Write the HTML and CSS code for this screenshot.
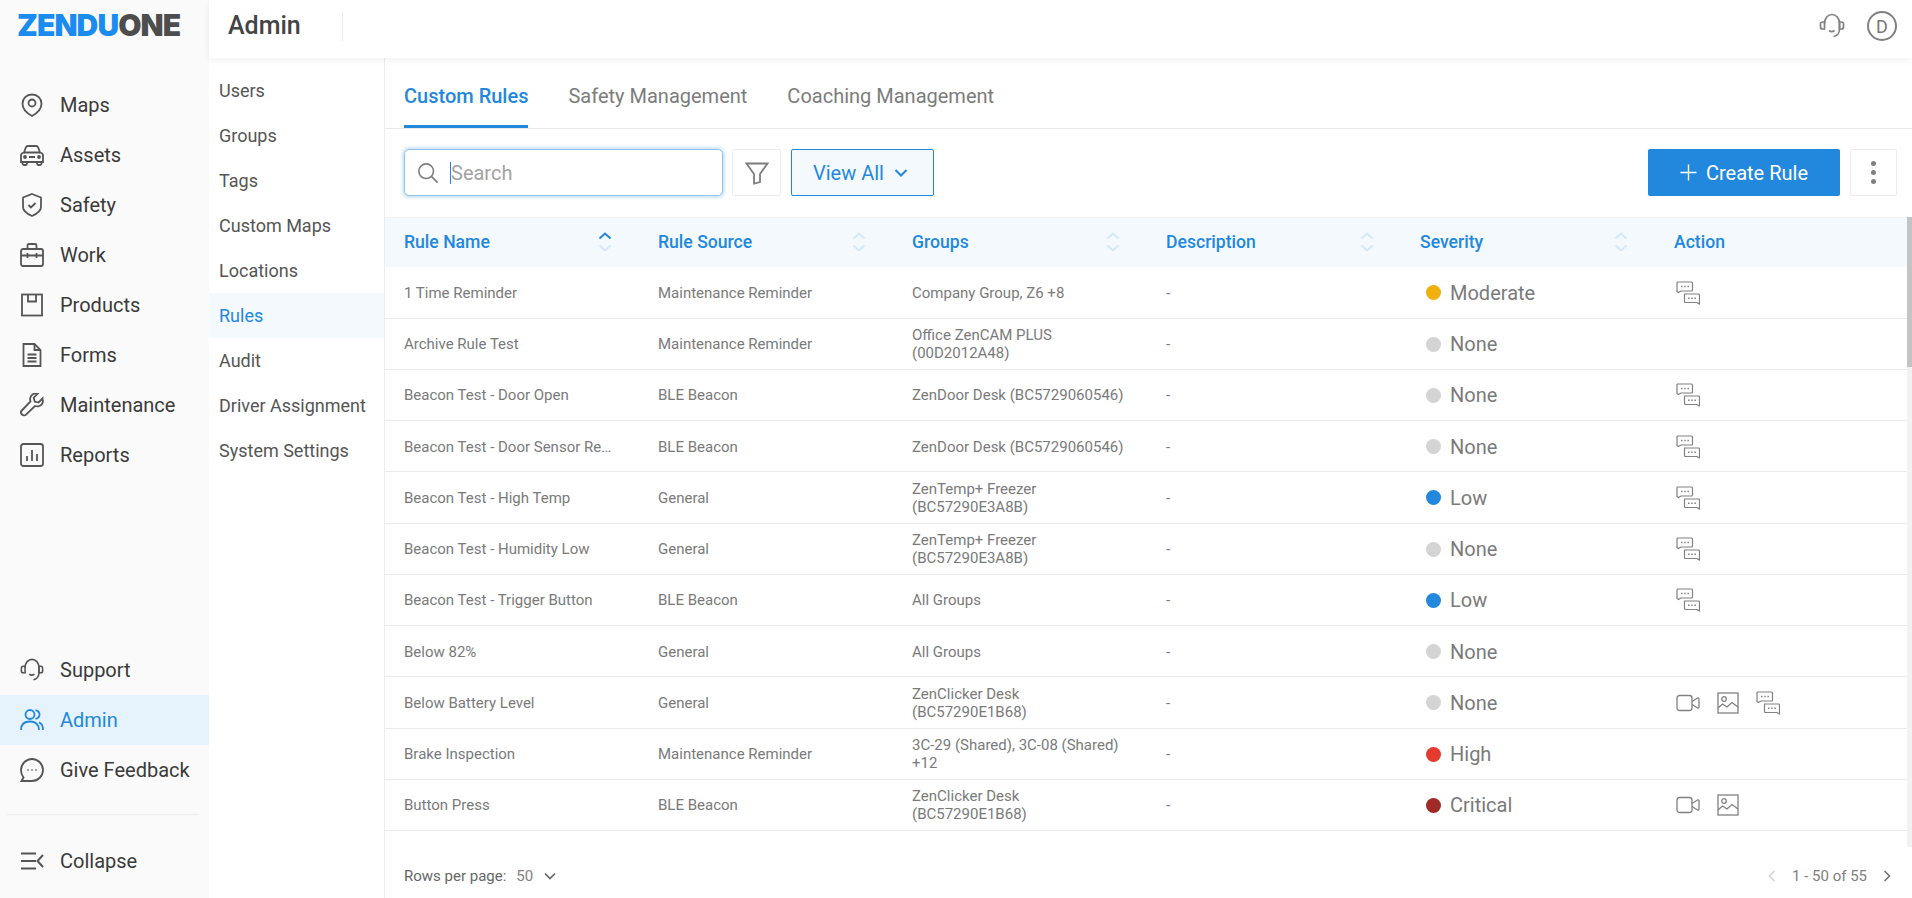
FILE: index.html
```html
<!DOCTYPE html>
<html lang="en">
<head>
<meta charset="utf-8">
<title>ZenduOne Admin - Rules</title>
<link rel="stylesheet" href="styles.css">
</head>
<body>
<svg class="defs" width="0" height="0" aria-hidden="true">
  <symbol id="i-chat" viewBox="0 0 24 24" fill="none" stroke="currentColor" stroke-width="1.2">
    <path d="M1.500 1h14a1 1 0 0 1 1 1v7a1 1 0 0 1-1 1H5L2.500 11.500 1 10.500V1.500z"/>
    <path d="M8.500 13h14a1 1 0 0 1 1 1v7l-.3 2-2.200-1.500H9.500a1 1 0 0 1-1-1V14z"/>
    <path d="M5 5.500h1.500M8.200 5.500h1.500M11.400 5.500h1.500M12 17.200h1.500M15.200 17.200h1.500M18.400 17.200h1.500" stroke-width="1.500"/>
  </symbol>
  <symbol id="i-video" viewBox="0 0 24 18" fill="none" stroke="currentColor" stroke-width="1.300">
    <rect x="1" y="1.500" width="15" height="15" rx="2.500"/>
    <path d="M16 7.500l5.500-3.500c.8-.4 1.500 0 1.500.8v8.400c0 .8-.7 1.200-1.500.8L16 10.500"/>
  </symbol>
  <symbol id="i-image" viewBox="0 0 22 22" fill="none" stroke="currentColor" stroke-width="1.300">
    <rect x="1" y="1" width="20" height="20"/>
    <circle cx="7" cy="7" r="2.300"/>
    <path d="M1 16l4.500-4 4.500 3 5-4.500 6 4.500"/>
  </symbol>
  <symbol id="i-sort" viewBox="0 0 14 22" fill="none" stroke="currentColor" stroke-width="2">
    <path class="sort-up" d="M1.500 7.500L7 2.500l5.500 5"/>
    <path d="M1.500 14.500L7 19.500l5.500-5"/>
  </symbol>
  <symbol id="i-headset" viewBox="0 0 26 26" fill="none" stroke="currentColor" stroke-width="1.700">
    <path d="M5.500 10.500C5.500 5 9 1.500 13 1.500s7.500 3.500 7.500 9v6c0 4-3 6.500-6 7"/>
    <path d="M5.500 9H3.500A2 2 0 0 0 1.500 11v3a2 2 0 0 0 2 2h2zM20.500 9h2a2 2 0 0 1 2 2v3a2 2 0 0 1-2 2h-2z"/>
    <path d="M10 17.500c1.500 1.200 4 1.200 5.500 0"/>
  </symbol>
</svg>

<div class="app">
  <aside class="sidebar">
    <div class="logo"><span class="logo-blue">ZENDU</span><span class="logo-gray">ONE</span></div>
    <nav class="nav nav-main">
      <a class="nav-item"><svg class="nav-icon" viewBox="0 0 24 24" fill="none" stroke="currentColor" stroke-width="1.800"><path d="M12 1.500c5.500 0 9.500 4 9.500 9.200 0 5.300-5 9.800-9.500 12.300-4.500-2.500-9.500-7-9.500-12.300C2.500 5.500 6.500 1.500 12 1.500z"/><circle cx="12" cy="10" r="3.500"/></svg>Maps</a>
      <a class="nav-item"><svg class="nav-icon" viewBox="0 0 24 24" fill="none" stroke="currentColor" stroke-width="1.800"><path d="M1 12.500c0-1.500 1-2.500 3-3l1.800-5c.4-1 1-1.500 2-1.500h8.400c1 0 1.600.5 2 1.500l1.800 5c2 .5 3 1.500 3 3v6.500H1z"/><path d="M4 9.500h16M2.500 19v1.500c0 1 .5 1.500 1.500 1.500h1.500c1 0 1.500-.5 1.500-1.500V19M17 19v1.500c0 1 .5 1.500 1.500 1.500H20c1 0 1.500-.5 1.500-1.500V19M9 14h6"/><circle cx="5" cy="14" r="1" fill="currentColor"/><circle cx="19" cy="14" r="1" fill="currentColor"/></svg>Assets</a>
      <a class="nav-item"><svg class="nav-icon" viewBox="0 0 24 24" fill="none" stroke="currentColor" stroke-width="1.800"><path d="M12 1l9 3.500v9.500c0 4-4.500 7-9 9-4.500-2-9-5-9-9V4.500z"/><path d="M8.500 12l2.500 2.500 4.500-4.500"/></svg>Safety</a>
      <a class="nav-item"><svg class="nav-icon" viewBox="0 0 24 24" fill="none" stroke="currentColor" stroke-width="1.800"><rect x="1" y="6" width="22" height="17" rx="2"/><path d="M7.500 6V2.500C7.500 1.500 8 1 9 1h6c1 0 1.500.5 1.500 1.500V6M1 12.500h22M7.500 10v5M16.500 10v5"/></svg>Work</a>
      <a class="nav-item"><svg class="nav-icon" viewBox="0 0 24 24" fill="none" stroke="currentColor" stroke-width="1.800"><rect x="2" y="1.500" width="20" height="21"/><path d="M8 1.500v7h8v-7"/></svg>Products</a>
      <a class="nav-item"><svg class="nav-icon" viewBox="0 0 24 24" fill="none" stroke="currentColor" stroke-width="1.800"><path d="M3.500 1h11l6 6v16h-17z"/><path d="M14.500 1v6h6M7.500 11.500h9M7.500 15h9M7.500 18.500h9"/></svg>Forms</a>
      <a class="nav-item"><svg class="nav-icon" viewBox="0 0 24 24" fill="none" stroke="currentColor" stroke-width="1.800"><path d="M22.500 5.500l-4 4-3.800-1-1-3.800 4-4c-3.500-1-7 1-7.500 4.500-.2 1.200 0 2.300.3 3.300L1.800 17.500c-1 1-1 2.800.2 4s3 1.200 4 .2l9-8.700c1 .3 2.100.5 3.300.3 3.500-.5 5.500-4 4.200-7.300z"/></svg>Maintenance</a>
      <a class="nav-item"><svg class="nav-icon" viewBox="0 0 24 24" fill="none" stroke="currentColor" stroke-width="1.800"><rect x="1" y="1" width="22" height="22" rx="2.500"/><path d="M7 13v5M12 7v11M17 11v7"/></svg>Reports</a>
    </nav>
    <nav class="nav nav-bottom">
      <a class="nav-item"><svg class="nav-icon" viewBox="0 0 26 26"><use href="#i-headset"/></svg>Support</a>
      <a class="nav-item active"><svg class="nav-icon" viewBox="0 0 24 24" fill="none" stroke="currentColor" stroke-width="1.800"><circle cx="10" cy="6.500" r="4.500"/><path d="M1 22c0-5.500 3.500-8.500 9-8.500s9 3 9 8.500M15.500 2.200c2.500.5 4 2.200 4 4.300s-1.500 3.800-4 4.300M19 14.300c2.800 1 4 3.800 4 7.700"/></svg>Admin</a>
      <a class="nav-item"><svg class="nav-icon" viewBox="0 0 24 24" fill="none" stroke="currentColor" stroke-width="1.800"><path d="M12 1c6 0 11 5 11 11s-5 11-11 11H1.500l2-3.500C2 17.500 1 15 1 12 1 6 6 1 12 1z"/><path d="M7.500 12h1M11.500 12h1M15.500 12h1" stroke-width="2"/></svg>Give Feedback</a>
    </nav>
    <div class="nav-collapse">
      <a class="nav-item"><svg class="nav-icon" viewBox="0 0 24 24" fill="none" stroke="currentColor" stroke-width="2"><path d="M1 4.500h15M1 12h15M1 19.500h15M23 6l-5.500 6 5.500 6"/></svg>Collapse</a>
    </div>
  </aside>

  <div class="main">
    <header class="topbar">
      <h1 class="page-title">Admin</h1>
      <span class="title-divider"></span>
      <div class="topbar-right">
        <svg class="top-icon" viewBox="0 0 26 26"><use href="#i-headset"/></svg>
        <span class="avatar">D</span>
      </div>
    </header>

    <div class="body">
      <nav class="subnav">
        <a class="sub-item">Users</a>
        <a class="sub-item">Groups</a>
        <a class="sub-item">Tags</a>
        <a class="sub-item">Custom Maps</a>
        <a class="sub-item">Locations</a>
        <a class="sub-item active">Rules</a>
        <a class="sub-item">Audit</a>
        <a class="sub-item">Driver Assignment</a>
        <a class="sub-item">System Settings</a>
      </nav>

      <section class="content">
        <div class="tabs">
          <a class="tab active">Custom Rules</a>
          <a class="tab">Safety Management</a>
          <a class="tab">Coaching Management</a>
        </div>

        <div class="toolbar">
          <div class="search">
            <svg class="search-icon" viewBox="0 0 24 24" fill="none" stroke="currentColor" stroke-width="1.800"><circle cx="10" cy="10" r="8"/><path d="M16 16l6.500 6.500"/></svg>
            <span class="caret"></span>
            <span class="placeholder">Search</span>
          </div>
          <button class="icon-btn filter-btn"><svg viewBox="0 0 24 24" width="24" height="24" fill="none" stroke="currentColor" stroke-width="1.800"><path d="M1.500 2.500h21L15 13v8l-6 1.500V13z"/></svg></button>
          <button class="view-btn">View All<svg viewBox="0 0 14 14" width="14" height="14" fill="none" stroke="currentColor" stroke-width="2"><path d="M1.500 4l5.500 5.500L12.500 4"/></svg></button>
          <span class="spacer"></span>
          <button class="create-btn"><svg viewBox="0 0 18 18" width="17" height="17" fill="none" stroke="currentColor" stroke-width="1.500"><path d="M9 0.500v17M0.500 9h17"/></svg>Create Rule</button>
          <button class="icon-btn more-btn"><span class="dot"></span><span class="dot"></span><span class="dot"></span></button>
        </div>

        <div class="table-wrap">
          <div class="table">
            <div class="row head">
              <div class="cell">Rule Name<svg class="sort sorted"><use href="#i-sort"/></svg></div>
              <div class="cell">Rule Source<svg class="sort"><use href="#i-sort"/></svg></div>
              <div class="cell">Groups<svg class="sort"><use href="#i-sort"/></svg></div>
              <div class="cell">Description<svg class="sort"><use href="#i-sort"/></svg></div>
              <div class="cell">Severity<svg class="sort"><use href="#i-sort"/></svg></div>
              <div class="cell">Action</div>
            </div>

            <div class="row">
              <div class="cell"><span class="clip">1 Time Reminder</span></div>
              <div class="cell">Maintenance Reminder</div>
              <div class="cell"><span class="wrap">Company Group, Z6 +8</span></div>
              <div class="cell">-</div>
              <div class="cell sev"><i class="sev-dot moderate"></i>Moderate</div>
              <div class="cell actions"><svg class="a-chat"><use href="#i-chat"/></svg></div>
            </div>
            <div class="row">
              <div class="cell"><span class="clip">Archive Rule Test</span></div>
              <div class="cell">Maintenance Reminder</div>
              <div class="cell"><span class="wrap">Office ZenCAM PLUS (00D2012A48)</span></div>
              <div class="cell">-</div>
              <div class="cell sev"><i class="sev-dot none"></i>None</div>
              <div class="cell actions"></div>
            </div>
            <div class="row">
              <div class="cell"><span class="clip">Beacon Test - Door Open</span></div>
              <div class="cell">BLE Beacon</div>
              <div class="cell"><span class="wrap">ZenDoor Desk (BC5729060546)</span></div>
              <div class="cell">-</div>
              <div class="cell sev"><i class="sev-dot none"></i>None</div>
              <div class="cell actions"><svg class="a-chat"><use href="#i-chat"/></svg></div>
            </div>
            <div class="row">
              <div class="cell"><span class="clip">Beacon Test - Door Sensor Reminder</span></div>
              <div class="cell">BLE Beacon</div>
              <div class="cell"><span class="wrap">ZenDoor Desk (BC5729060546)</span></div>
              <div class="cell">-</div>
              <div class="cell sev"><i class="sev-dot none"></i>None</div>
              <div class="cell actions"><svg class="a-chat"><use href="#i-chat"/></svg></div>
            </div>
            <div class="row">
              <div class="cell"><span class="clip">Beacon Test - High Temp</span></div>
              <div class="cell">General</div>
              <div class="cell"><span class="wrap">ZenTemp+ Freezer (BC57290E3A8B)</span></div>
              <div class="cell">-</div>
              <div class="cell sev"><i class="sev-dot low"></i>Low</div>
              <div class="cell actions"><svg class="a-chat"><use href="#i-chat"/></svg></div>
            </div>
            <div class="row">
              <div class="cell"><span class="clip">Beacon Test - Humidity Low</span></div>
              <div class="cell">General</div>
              <div class="cell"><span class="wrap">ZenTemp+ Freezer (BC57290E3A8B)</span></div>
              <div class="cell">-</div>
              <div class="cell sev"><i class="sev-dot none"></i>None</div>
              <div class="cell actions"><svg class="a-chat"><use href="#i-chat"/></svg></div>
            </div>
            <div class="row">
              <div class="cell"><span class="clip">Beacon Test - Trigger Button</span></div>
              <div class="cell">BLE Beacon</div>
              <div class="cell"><span class="wrap">All Groups</span></div>
              <div class="cell">-</div>
              <div class="cell sev"><i class="sev-dot low"></i>Low</div>
              <div class="cell actions"><svg class="a-chat"><use href="#i-chat"/></svg></div>
            </div>
            <div class="row">
              <div class="cell"><span class="clip">Below 82%</span></div>
              <div class="cell">General</div>
              <div class="cell"><span class="wrap">All Groups</span></div>
              <div class="cell">-</div>
              <div class="cell sev"><i class="sev-dot none"></i>None</div>
              <div class="cell actions"></div>
            </div>
            <div class="row">
              <div class="cell"><span class="clip">Below Battery Level</span></div>
              <div class="cell">General</div>
              <div class="cell"><span class="wrap">ZenClicker Desk (BC57290E1B68)</span></div>
              <div class="cell">-</div>
              <div class="cell sev"><i class="sev-dot none"></i>None</div>
              <div class="cell actions"><svg class="a-video"><use href="#i-video"/></svg><svg class="a-image"><use href="#i-image"/></svg><svg class="a-chat"><use href="#i-chat"/></svg></div>
            </div>
            <div class="row">
              <div class="cell"><span class="clip">Brake Inspection</span></div>
              <div class="cell">Maintenance Reminder</div>
              <div class="cell"><span class="wrap">3C-29 (Shared), 3C-08 (Shared) +12</span></div>
              <div class="cell">-</div>
              <div class="cell sev"><i class="sev-dot high"></i>High</div>
              <div class="cell actions"></div>
            </div>
            <div class="row">
              <div class="cell"><span class="clip">Button Press</span></div>
              <div class="cell">BLE Beacon</div>
              <div class="cell"><span class="wrap">ZenClicker Desk (BC57290E1B68)</span></div>
              <div class="cell">-</div>
              <div class="cell sev"><i class="sev-dot critical"></i>Critical</div>
              <div class="cell actions"><svg class="a-video"><use href="#i-video"/></svg><svg class="a-image"><use href="#i-image"/></svg></div>
            </div>
          </div>
          <div class="scrollbar"><span class="thumb"></span></div>
        </div>

        <footer class="pager">
          <span class="rows-label">Rows per page:</span>
          <span class="rows-value">50</span>
          <svg class="pager-caret" viewBox="0 0 14 14" fill="none" stroke="currentColor" stroke-width="1.700"><path d="M2 4.500l5 5 5-5"/></svg>
          <span class="spacer"></span>
          <svg class="pager-arrow disabled" viewBox="0 0 14 14" fill="none" stroke="currentColor" stroke-width="1.700"><path d="M9.500 2l-5 5 5 5"/></svg>
          <span class="range">1 - 50 of 55</span>
          <svg class="pager-arrow" viewBox="0 0 14 14" fill="none" stroke="currentColor" stroke-width="1.700"><path d="M4.500 2l5 5-5 5"/></svg>
        </footer>
      </section>
    </div>
  </div>
</div>
</body>
</html>
```

FILE: styles.css
```css
* { box-sizing: border-box; }
html, body { margin: 0; height: 100%; }
body {
  font-family: Roboto, "Liberation Sans", sans-serif;
  color: #333;
  background: #fff;
  overflow: hidden;
}
.defs { position: absolute; }
.app { display: flex; height: 898px; }

/* Sidebar */
.sidebar {
  width: 209px;
  flex: none;
  background: #fafafa;
  display: flex;
  flex-direction: column;
}
.logo {
  height: 50px;
  padding-left: 17px;
  display: flex;
  align-items: center;
  font-family: Inter, Roboto, sans-serif;
  font-weight: 900;
  font-size: 30px;
  line-height: 1;
  letter-spacing: -0.9px;
}
.logo-blue { color: #1a8cf0; }
.logo-gray { color: #4d4d4d; }
.nav-main { margin-top: 30px; }
.nav-bottom { margin-top: auto; }
.nav-item {
  height: 50px;
  display: flex;
  align-items: center;
  gap: 16px;
  padding-left: 20px;
  font-size: 20px;
  color: #3a3a3a;
}
.nav-item.active { background: #e6f2fc; color: #2288dd; }
.nav-icon { width: 24px; height: 24px; flex: none; color: #555; }
.nav-item.active .nav-icon { color: #2288dd; }
.nav-collapse {
  margin: 19px 10px 0 7px;
  padding: 21px 0 12px;
  border-top: 1px solid #ececec;
}
.nav-collapse .nav-item { margin-left: -7px; }

/* Top bar */
.main { flex: 1; min-width: 0; display: flex; flex-direction: column; }
.topbar {
  height: 58px;
  flex: none;
  display: flex;
  align-items: center;
  padding: 0 15px 6px 19px;
  background: #fff;
  box-shadow: 0 2px 8px rgba(0, 0, 0, 0.06);
  position: relative;
  z-index: 2;
}
.page-title { margin: 0 0 2px; font-size: 25px; font-weight: 500; color: #444; }
.title-divider { width: 1px; height: 29px; margin-left: 41px; background: #eee; }
.topbar-right { margin-left: auto; display: flex; align-items: center; gap: 22px; }
.top-icon { width: 26px; height: 26px; color: #808080; }
.avatar {
  width: 30px;
  height: 30px;
  border: 2px solid #808080;
  border-radius: 50%;
  display: flex;
  align-items: center;
  justify-content: center;
  font-size: 18px;
  color: #777;
}

/* Layout under the top bar */
.body { flex: 1; min-height: 0; display: flex; }
.subnav {
  width: 176px;
  flex: none;
  padding-top: 10px;
  border-right: 1px solid #ededed;
  background: #fff;
}
.sub-item {
  height: 45px;
  display: flex;
  align-items: center;
  padding-left: 10px;
  font-size: 18px;
  color: #555;
}
.sub-item.active { background: #f4f9fd; color: #2288dd; }
.content { flex: 1; min-width: 0; display: flex; flex-direction: column; }

/* Tabs */
.tabs {
  height: 71px;
  flex: none;
  display: flex;
  gap: 40px;
  padding-left: 19px;
  border-bottom: 1px solid #e8e8e8;
}
.tab {
  display: flex;
  align-items: center;
  padding-top: 8px;
  font-size: 20px;
  font-weight: 400;
  color: #7c7c7c;
  border-bottom: 3px solid transparent;
}
.tab.active { font-weight: 500; color: #2288dd; border-bottom-color: #2288dd; }

/* Toolbar */
.toolbar {
  height: 88px;
  flex: none;
  display: flex;
  align-items: center;
  padding: 0 15px 1px 19px;
}
.spacer { flex: 1; }
.search {
  width: 319px;
  height: 47px;
  display: flex;
  align-items: center;
  padding-left: 12px;
  background: #fff;
  border: 1px solid #8fc3ef;
  border-radius: 5px;
  box-shadow: 0 0 3px 2px #cfe5f8;
}
.search-icon { width: 22px; height: 22px; color: #7d7d7d; }
.caret { width: 1px; height: 22px; margin-left: 11px; background: #2288dd; }
.placeholder { font-size: 20px; color: #a3a3a3; }
.icon-btn {
  height: 47px;
  padding: 0;
  background: #fff;
  border: 1px solid #ececec;
  border-radius: 2px;
  display: flex;
  align-items: center;
  justify-content: center;
  color: #7d7d7d;
}
.filter-btn { width: 49px; margin-left: 9px; }
.view-btn {
  width: 143px;
  height: 47px;
  margin-left: 10px;
  padding-left: 21px;
  display: flex;
  align-items: center;
  gap: 10px;
  font: 400 20px Roboto, sans-serif;
  color: #2288dd;
  background: #f4f9fd;
  border: 1px solid #2288dd;
  border-radius: 2px;
}
.create-btn {
  width: 192px;
  height: 47px;
  padding-left: 6px;
  display: flex;
  align-items: center;
  justify-content: center;
  gap: 9px;
  font: 400 20px Roboto, sans-serif;
  color: #fff;
  background: #2288dd;
  border: 0;
  border-radius: 2px;
}
.more-btn { width: 47px; margin-left: 10px; flex-direction: column; gap: 4px; }
.dot { width: 5px; height: 5px; border-radius: 50%; background: #808080; }

/* Table */
.table-wrap { flex: none; height: 630px; display: flex; overflow: hidden; }
.table { flex: 1; min-width: 0; }
.row {
  display: grid;
  grid-template-columns: repeat(5, 254px) 1fr;
  height: 51.25px;
  border-bottom: 1px solid #ececec;
}
.cell {
  display: flex;
  align-items: center;
  padding: 0.4px 0 0 19px;
  font-size: 15px;
  line-height: 18px;
  color: #7a7a7a;
  min-width: 0;
}
.row.head {
  height: 50.45px;
  background: #f4f9fd;
  border-top: 1px solid #efefef;
  border-bottom: 0;
}
.row.head .cell {
  justify-content: space-between;
  padding: 0 27px 1px 19px;
  font-size: 17.6px;
  font-weight: 500;
  color: #2288dd;
}
.sort { width: 14px; height: 22px; color: #d3e8fa; flex: none; }
.sort-up { stroke: var(--sort-up, currentColor); }
.sorted { --sort-up: #2288dd; }
.clip {
  display: block;
  width: 210px;
  overflow: hidden;
  white-space: nowrap;
  text-overflow: ellipsis;
}
.wrap { display: block; width: 215px; }
.cell.sev { padding-left: 25px; gap: 9px; font-size: 20px; }
.sev-dot { width: 15px; height: 15px; border-radius: 50%; flex: none; }
.moderate { background: #f2b00e; }
.none { background: #d4d4d4; }
.low { background: #2288dd; }
.high { background: #e53a2f; }
.critical { background: #a02a26; }
.cell.actions { gap: 17px; padding-left: 21px; color: #808080; }
.a-chat { width: 24px; height: 24px; }
.a-video { width: 24px; height: 18px; }
.a-image { width: 22px; height: 22px; }

.scrollbar { width: 5px; flex: none; background: #f2f2f2; }
.thumb { display: block; height: 150px; background: #c4c4c4; }

/* Pager */
.pager {
  flex: 1;
  display: flex;
  align-items: center;
  padding: 7px 18px 0 19px;
  font-size: 15px;
  color: #666;
}
.rows-value { margin-left: 10px; color: #808080; }
.pager-caret { width: 14px; height: 14px; margin-left: 10px; color: #666; }
.pager-arrow { width: 14px; height: 14px; color: #777; }
.pager-arrow.disabled { color: #d4d4d4; }
.range { margin: 0 13px; color: #808080; }
```
